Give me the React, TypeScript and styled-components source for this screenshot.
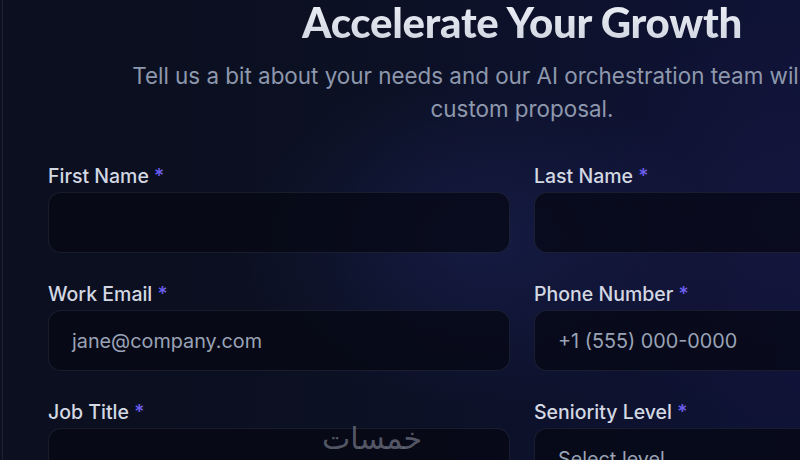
import styled, { createGlobalStyle } from "styled-components";

const GlobalStyle = createGlobalStyle`
  html, body {
    margin: 0;
    padding: 0;
    background: #0a0e1c;
    overflow: hidden;
  }
  * {
    box-sizing: border-box;
  }
`;

const fields = [
  { label: "First Name", placeholder: "" },
  { label: "Last Name", placeholder: "" },
  { label: "Work Email", placeholder: "jane@company.com" },
  { label: "Phone Number", placeholder: "+1 (555) 000-0000" },
  { label: "Job Title", placeholder: "" },
  { label: "Seniority Level", placeholder: "Select level" },
];

const App = () => {
  return (
    <>
      <GlobalStyle />
      <Page>
        <Card>
          <Header>
            <Title>Accelerate Your Growth</Title>
            <Subtitle>
              Tell us a bit about your needs and our AI orchestration team will prepare a
              custom proposal.
            </Subtitle>
          </Header>
          <Form>
            {fields.map((f) => (
              <Field key={f.label}>
                <Label>
                  {f.label} <Required>*</Required>
                </Label>
                <Input>{f.placeholder && <Placeholder>{f.placeholder}</Placeholder>}</Input>
              </Field>
            ))}
          </Form>
        </Card>
        <Watermark>خمسات</Watermark>
      </Page>
    </>
  );
};

export default App;

const Page = styled.div`
  position: relative;
  width: 800px;
  height: 460px;
  overflow: hidden;
  padding-left: 2px;
  background:
    radial-gradient(ellipse 340px 240px at 480px 240px, rgba(30, 36, 92, 0.5), transparent 70%),
    radial-gradient(ellipse 300px 300px at 780px 220px, rgba(30, 26, 76, 0.35), transparent 70%),
    linear-gradient(90deg, #0b0f1f 0%, #0b1022 40%, #0f1336 100%);
`;

const Card = styled.div`
  width: 1040px;
  margin-top: -7px;
  border-left: 1px solid rgba(255, 255, 255, 0.08);
  padding: 0 46px 40px 45px;
  display: flex;
  flex-direction: column;
  gap: 39px;
`;

const Header = styled.div`
  display: flex;
  flex-direction: column;
  align-items: center;
  gap: 8px;
  text-align: center;
`;

const Title = styled.h1`
  margin: 0;
  font-family: "Lato", sans-serif;
  font-weight: 900;
  font-size: 42px;
  line-height: 58px;
  letter-spacing: -0.3px;
  background: linear-gradient(180deg, #f4f6fb 0%, #c9cfdc 100%);
  -webkit-background-clip: text;
  background-clip: text;
  color: transparent;
`;

const Subtitle = styled.p`
  margin: 0;
  max-width: 830px;
  font-family: "Inter", sans-serif;
  font-size: 22.4px;
  line-height: 33px;
  color: #8e98ad;
`;

const Form = styled.div`
  display: grid;
  grid-template-columns: 462px 462px;
  column-gap: 24px;
  row-gap: 29px;
`;

const Field = styled.div`
  display: flex;
  flex-direction: column;
  gap: 4px;
`;

const Label = styled.label`
  font-family: "Inter", sans-serif;
  font-size: 19.5px;
  font-weight: 500;
  line-height: 24px;
  color: #d3d8e3;
`;

const Required = styled.span`
  color: #6d5ff0;
`;

const Input = styled.div`
  height: 61px;
  border-radius: 13px;
  border: 1px solid rgba(148, 163, 200, 0.13);
  background: rgba(5, 7, 18, 0.72);
  display: flex;
  align-items: center;
  padding: 0 23px;
`;

const Placeholder = styled.span`
  font-family: "Inter", sans-serif;
  font-size: 19.8px;
  color: #9aa3b6;
`;

const Watermark = styled.div`
  position: absolute;
  left: 322px;
  top: 421px;
  font-family: "DejaVu Sans", sans-serif;
  font-size: 30px;
  color: rgba(160, 166, 180, 0.5);
  direction: rtl;
`;
